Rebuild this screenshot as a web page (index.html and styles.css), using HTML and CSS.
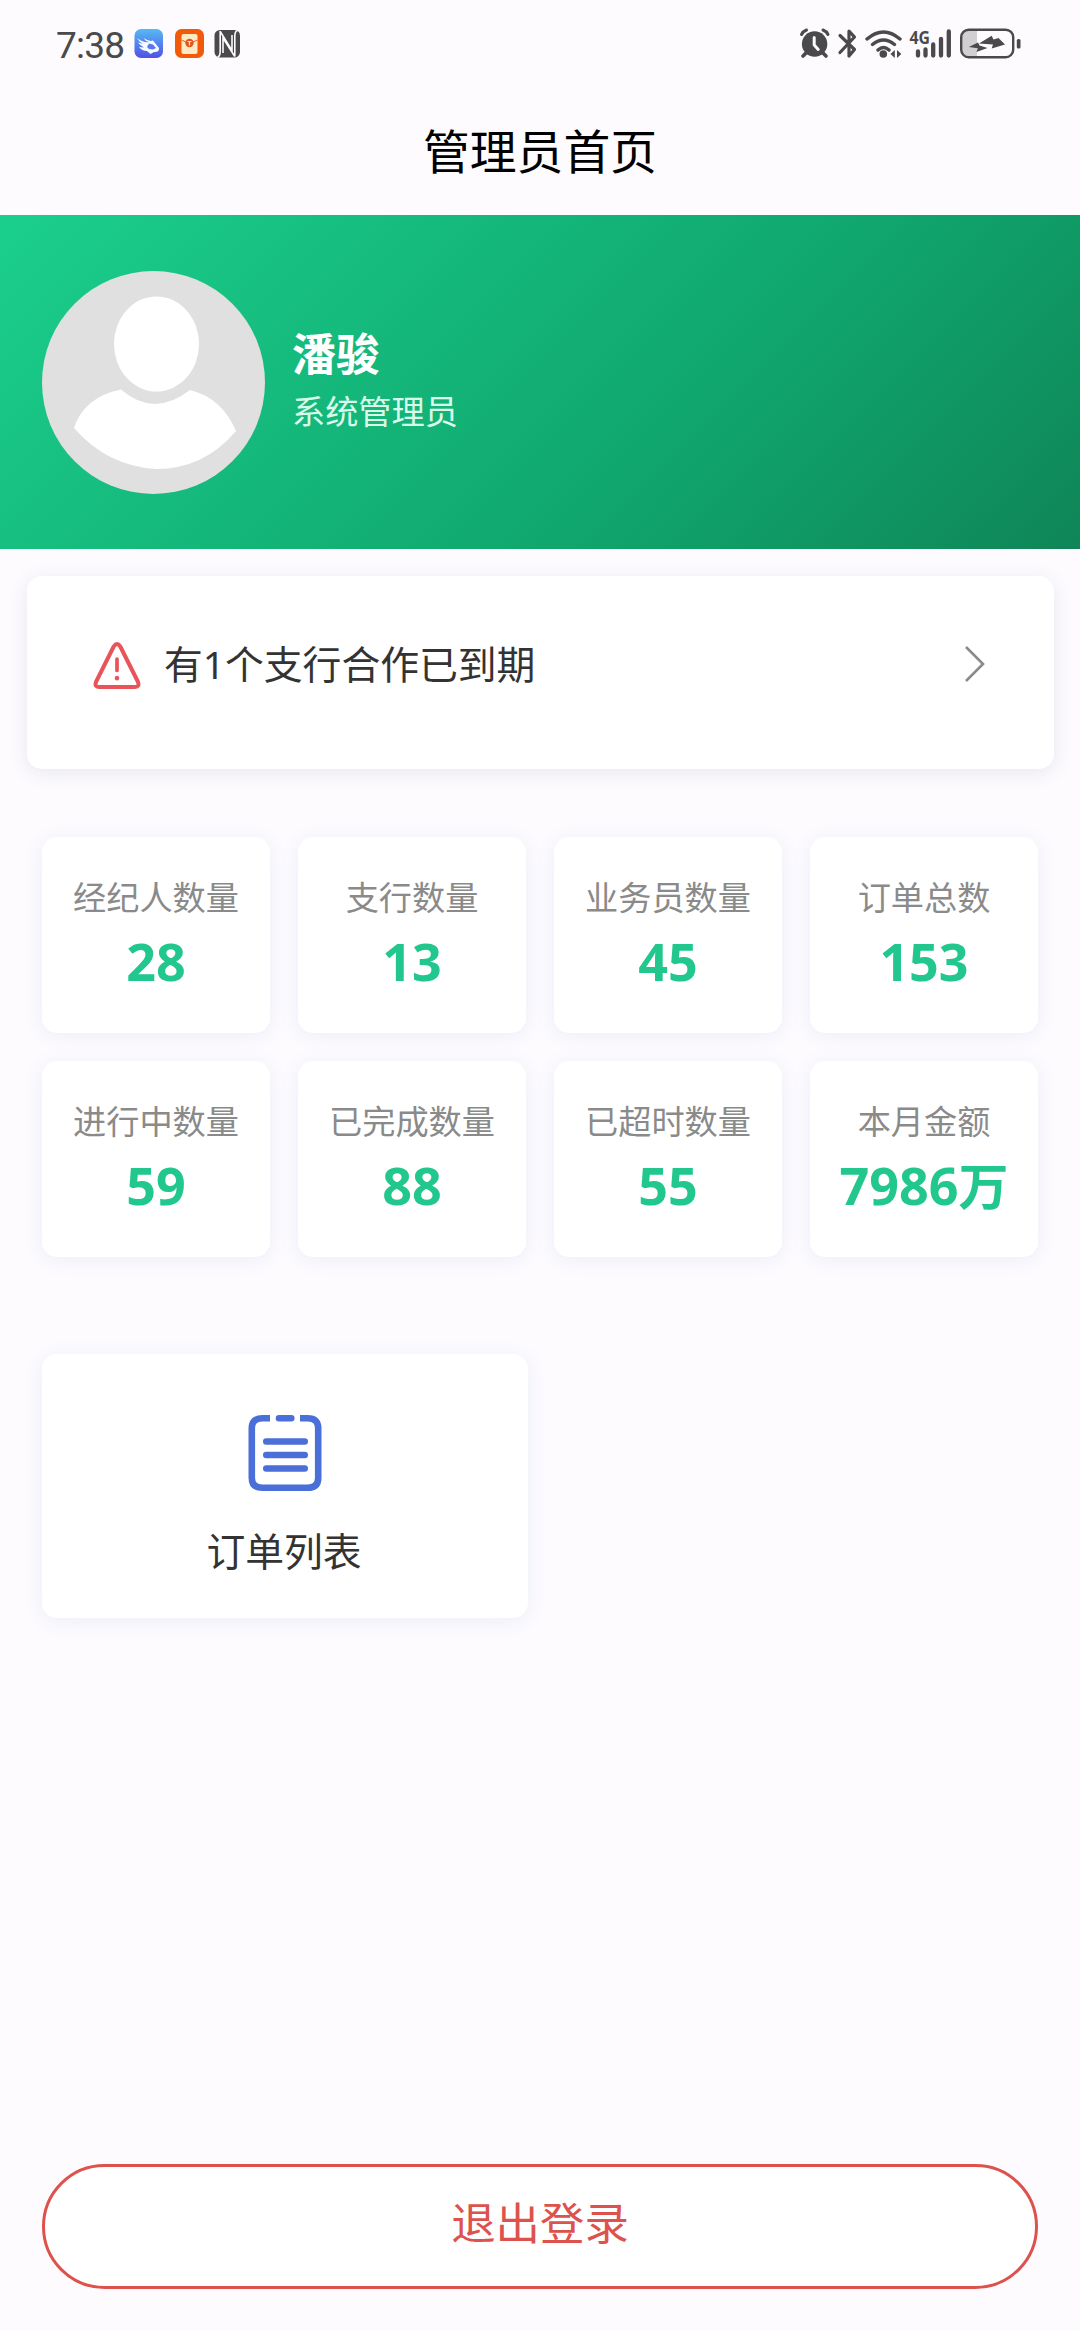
FILE: index.html
```html
<!DOCTYPE html>
<html lang="zh-CN">
<head>
<meta charset="UTF-8">
<title>管理员首页</title>
<link rel="stylesheet" href="styles.css">
</head>
<body>
<div class="page">
  <div class="status">
    <span class="clock">7:38</span>
    <svg class="status-left" width="110" height="34" viewBox="132 26 110 34">
      <defs><linearGradient id="sky" x1="0" y1="0" x2="0" y2="1"><stop offset="0" stop-color="#55b9f5"/><stop offset="1" stop-color="#5350e6"/></linearGradient></defs>
      <rect x="134.500" y="29" width="28.500" height="29" rx="6.500" fill="url(#sky)"/>
      <path d="M137 38q6 5 12 4q-4-1-5.500-4q6 4 9.500 2.500l6 7.500q.5 4.500-5 4l-3.500 2-3.500-3q-5 0-8-4l5 .5q-4-2-6-5l5.500 1.500q-4.500-2-6.500-6Z" fill="#f5fbff"/>
      <path d="M149 43.500l4 1 3 3.500-3 1.500-4-.5-2-2" fill="#5a78ee"/>
      <rect x="175" y="29" width="29" height="29" rx="6.500" fill="#f25a09"/>
      <rect x="181.500" y="34" width="16" height="20" rx="2" fill="#ffe9c4"/>
      <path d="M181.500 40l5.500 2.500M197.500 40l-5.500 2.500" stroke="#e27a3c" stroke-width="1.200"/>
      <circle cx="189.500" cy="43" r="4.200" fill="#df571b"/>
      <path d="M187.500 41.500h4M189.500 41.500v4" stroke="#ffe9c4" stroke-width="1.200"/>
      <rect x="214.500" y="30" width="25.500" height="27.500" rx="5.500" fill="#4a494b"/>
      <path d="M220.200 31v20q0 5.500-2.800 6M220.200 31.500L232 50.500V35M234.800 56.500v-20q0-5.500 2.800-6M223 53V38L234.800 56.500" fill="none" stroke="#fdfbfe" stroke-width="1.600"/>
    </svg>
    <svg class="status-right" width="224" height="34" viewBox="798 26 224 34">
      <g fill="#4a494b">
        <circle cx="814.600" cy="44" r="12.700"/>
        <path d="M807 52l-4 4M822 52l4 4" stroke="#4a494b" stroke-width="3.600" stroke-linecap="round"/>
        <path d="M801.500 34.500q1.500-3.200 5-4.500M828 34.500q-1.500-3.200-5-4.500" fill="none" stroke="#4a494b" stroke-width="3" stroke-linecap="round"/>
        <path d="M814.200 37.500v7.500l4 4.500" fill="none" stroke="#fdfbfe" stroke-width="3" stroke-linecap="round"/>
        <path d="M840 35.500l14.500 14-5.500 6.500v-25l5.500 6-14.500 15.500" fill="none" stroke="#4a494b" stroke-width="3.200" stroke-linejoin="round" stroke-linecap="round"/>
        <path d="M867 39q16.500-14 33 0M872.500 44.500q11-9 22 0M878 50q5.500-5 11 0" fill="none" stroke="#4a494b" stroke-width="3.400" stroke-linecap="round"/>
        <circle cx="883.300" cy="54" r="3.800"/>
        <path d="M894.800 50v8l-4.300-4ZM897 50v8l4.300-4Z"/>
        <path d="M918 51.500v4M925.500 49.500v6M933.200 44.500v11M941 39v16.500M948.800 31.500v24" stroke="#4a494b" stroke-width="4.300" stroke-linecap="round"/>
        <text x="909.500" y="43.500" class="net" textLength="20.500" lengthAdjust="spacingAndGlyphs">4G</text>
        <path d="M968 31h9v25h-9q-6 0-6-6V37q0-6 6-6Z" fill="#d1cfd2"/>
        <rect x="961.200" y="29.700" width="52" height="27.500" rx="7.500" fill="none" stroke="#4a494b" stroke-width="2.400"/>
        <rect x="1016.800" y="39" width="3.700" height="9.500" rx="1.500"/>
        <path d="M979 43.500L991.700 35.700L993.500 39.500L998.500 38L1005 44.500L991.700 48.500L993 44.500Z"/>
        <path d="M968.800 47L978 42.500L979.500 45.500L987.500 48L976.500 52L977.700 48.300Z"/>
      </g>
    </svg>
  </div>
  <header class="title">管理员首页</header>
  <section class="hero">
    <svg class="avatar" viewBox="0 0 223 223">
      <circle cx="111.500" cy="111.500" r="111.500" fill="#e0e0e0"/>
      <ellipse cx="114.500" cy="73" rx="42.500" ry="47.500" fill="#fff"/>
      <path d="M79 118.500Q112 147 148 119Q180 127 194 160Q162 198 114 198Q65 195 32 157Q42 126 79 118.500Z" fill="#fff"/>
    </svg>
    <div class="who">
      <div class="name">潘骏</div>
      <div class="role">系统管理员</div>
    </div>
  </section>
  <section class="notice card">
    <svg width="48" height="48" viewBox="0 0 48 48" fill="none" stroke="#e9535a" stroke-linecap="round" stroke-linejoin="round">
      <path d="M20.700 4.500L3.200 39.500Q1 45 6 45H42Q47 45 44.800 39.500L27.300 4.500Q24-.5 20.700 4.500Z" stroke-width="4"/>
      <path d="M24 17v11.500" stroke-width="3.700"/><path d="M24 36v.3" stroke-width="4.500"/>
    </svg>
    <span class="notice-text">有<span class="count">1</span>个支行合作已到期</span>
    <svg width="22" height="38" viewBox="0 0 22 38" fill="none" stroke="#8a8a8a" stroke-width="2.600"><path d="M1 2L18 19L1 36"/></svg>
  </section>
  <section class="stats">
    <div class="stat card"><span class="label">经纪人数量</span><span class="value">28</span></div>
    <div class="stat card"><span class="label">支行数量</span><span class="value">13</span></div>
    <div class="stat card"><span class="label">业务员数量</span><span class="value">45</span></div>
    <div class="stat card"><span class="label">订单总数</span><span class="value">153</span></div>
    <div class="stat card"><span class="label">进行中数量</span><span class="value">59</span></div>
    <div class="stat card"><span class="label">已完成数量</span><span class="value">88</span></div>
    <div class="stat card"><span class="label">已超时数量</span><span class="value">55</span></div>
    <div class="stat card"><span class="label">本月金额</span><span class="value">7986<span class="unit">万</span></span></div>
  </section>
  <section class="orders card">
    <svg width="74" height="78" viewBox="0 0 74 78" fill="none" stroke="#4a6fd8" stroke-width="6.600">
      <path d="M22 4.300H14.300Q3.800 4.300 3.800 14V64Q3.800 73.800 14.300 73.800H59.700Q70.200 73.800 70.200 64V14Q70.200 4.300 59.700 4.300H52"/>
      <path d="M31 4.300H43.300M18.300 27.500H56.700M18.300 41H56.700M18.300 54.500H56.700" stroke-linecap="round"/>
    </svg>
    <span class="orders-text">订单列表</span>
  </section>
  <button class="logout">退出登录</button>
</div>
</body>
</html>
```
FILE: styles.css
```css
* { box-sizing: border-box; }
body {
  margin: 0;
  background: #fdfbfe;
  font-family: "Noto Sans CJK SC", sans-serif;
  color: #333;
}
svg { display: block; flex: none; }
.page {
  display: flex;
  flex-direction: column;
  width: 1080px;
  height: 2331px;
}
.status {
  display: flex;
  align-items: flex-start;
  height: 88px;
  padding: 26px 58px 0 56px;
  color: #4a494b;
}
.clock {
  width: 76px;
  font: 400 37px/39px Roboto, sans-serif;
  letter-spacing: -0.8px;
}
.status-right { margin-left: auto; }
.net { font: 700 17.500px "Open Sans", sans-serif; }
.title {
  height: 127px;
  line-height: 121px;
  text-align: center;
  font-size: 46.800px;
  color: #000;
}
.hero {
  display: flex;
  align-items: center;
  gap: 27px;
  height: 334px;
  padding-left: 42px;
  background: linear-gradient(135deg, #1bcf8d 0%, #10a76e 62%, #0f8558 100%);
  color: #fff;
}
.avatar { width: 223px; height: 223px; }
.who { padding-bottom: 5px; }
.name { font-size: 44px; line-height: 59px; font-weight: 700; }
.role { font-size: 33.200px; line-height: 55px; color: #d9fbea; }
.card {
  background: #fff;
  border-radius: 15px;
  box-shadow: 0 3px 20px rgba(70, 100, 190, 0.09);
}
.notice {
  display: flex;
  align-items: flex-start;
  height: 193px;
  margin: 27px 26px 0 27px;
  padding: 66px 67px 0 66px;
  box-shadow: 0 4px 20px rgba(50, 60, 110, 0.1);
}
.notice-text {
  flex: 1;
  margin-left: 23px;
  font-size: 38.800px;
  line-height: 40px;
}
.count { font-family: "Noto Sans", sans-serif; }
.notice svg:last-child { margin-top: 3px; }
.stats {
  display: grid;
  grid-template-columns: repeat(4, 1fr);
  grid-auto-rows: 196px;
  gap: 28px;
  margin: 68px 42px 0;
}
.stat {
  display: flex;
  flex-direction: column;
  align-items: center;
  padding-top: 32px;
}
.label { font-size: 33.200px; line-height: 54px; color: #8a8a8a; }
.value {
  font: 700 52px/75px "Noto Sans", "Noto Sans CJK SC", sans-serif;
  height: 75px;
  color: #22c78d;
  white-space: nowrap;
}
.unit { font-size: 50px; line-height: 1; }
.orders {
  display: flex;
  flex-direction: column;
  align-items: center;
  width: 486px;
  height: 264px;
  margin: 97px 0 0 42px;
  padding-top: 60px;
}
.orders-text { margin: 29px 2px 0 0; font-size: 38.800px; line-height: 56px; }
.logout {
  height: 125px;
  margin: auto 42px 42px;
  padding: 0 0 12px;
  border: 3px solid #dd524d;
  border-radius: 63px;
  background: #fff;
  color: #dd524d;
  font: 400 44.400px "Noto Sans CJK SC", sans-serif;
}
```
